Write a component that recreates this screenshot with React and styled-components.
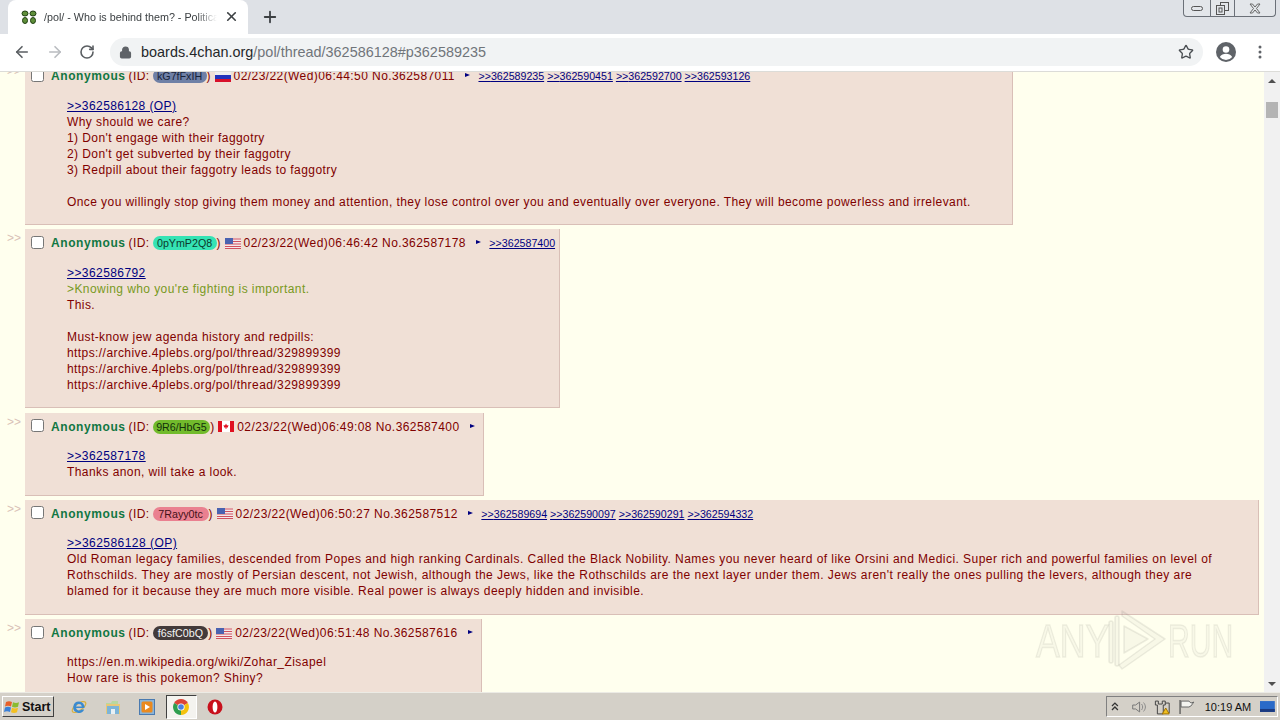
import React from "react";
import styled, { createGlobalStyle } from "styled-components";
import { ArrowLeft, ArrowRight, RotateCw, Lock, Star, X, Plus } from "lucide-react";

const Global = createGlobalStyle`
  html, body { margin: 0; padding: 0; height: 720px; overflow: hidden; background: #ffffee; }
  #root { height: 720px; }
  * { box-sizing: border-box; }
`;

const Screen = styled.div`
  width: 1280px; height: 720px; display: flex; flex-direction: column; overflow: hidden;
  font-family: "Liberation Sans", Arial, sans-serif;
`;
const TabStrip = styled.div`
  height: 34px; flex: none; background: #dee1e6; display: flex; align-items: flex-end; padding-left: 8px;
`;
const Tab = styled.div`
  width: 240px; height: 34px; background: #fff; border-radius: 8px 8px 0 0; display: flex; align-items: center;
  padding: 0 9px 1px 13px; gap: 7px; flex: none;
`;
const TabTitle = styled.div`
  flex: 1; overflow: hidden; white-space: nowrap; font-size: 10.75px; color: #3c4043;
  -webkit-mask-image: linear-gradient(90deg, #000 88%, transparent 100%);
  mask-image: linear-gradient(90deg, #000 88%, transparent 100%);
`;
const NewTab = styled.div`
  width: 30px; margin-left: 7px; height: 34px; display: flex; align-items: center; justify-content: center; color: #3c4043;
`;
const StripSpacer = styled.div`flex: 1; align-self: stretch;`;
const WindowButtons = styled.div`
  align-self: flex-start; display: flex; height: 17px; width: 93px; margin-right: 4px;
  border: 1px solid #6b7078; border-top: none; border-radius: 0 0 4px 4px; background: #e3e6ea;
`;
const WinBtn = styled.div`
  flex: ${(p) => p.$grow || 1}; display: flex; align-items: center; justify-content: center;
  & + & { border-left: 1px solid #6b7078; }
`;
const Toolbar = styled.div`
  height: 38px; flex: none; background: #fff; border-bottom: 1px solid #dcdcd8; display: flex; align-items: center;
  padding: 0 8px 1px 13px; color: #5f6368;
`;
const NavBtn = styled.div`
  width: 33px; display: flex; align-items: center; justify-content: flex-start; color: ${(p) => p.$off ? "#b9bcc0" : "#5a5e62"};
`;
const MenuBtn = styled.div`
  display: flex; align-items: center; margin-left: 22px;
`;
const Omnibox = styled.div`
  width: 1093px; margin-left: -2px; height: 28px; border-radius: 14px; background: #f1f3f4; display: flex; align-items: center;
  padding: 0 9px 0 9px; margin-right: 13px;
`;
const Url = styled.div`
  flex: 1; margin-left: 9px; font-size: 14.4px; white-space: nowrap; color: #70757a; letter-spacing: 0.02px;
  b { font-weight: 400; color: #24272a; }
`;
const Content = styled.div`
  flex: 1; min-height: 0; display: flex; position: relative; background: #ffffee; overflow: hidden;
`;
const Thread = styled.div`
  flex: 1; min-width: 0; margin-top: -10px;
  font-size: 12px; color: #800000; letter-spacing: 0.42px;
`;
const Row = styled.div`
  display: flex; margin-bottom: 4.3px;
`;
const Arrows = styled.div`
  width: 25px; flex: none; padding: 0 0 0 7px; font-size: 12px; line-height: 18px; color: #d9bfb7; letter-spacing: 0;
`;
const Post = styled.div`
  background: #f0e0d6; border-right: 1px solid #d9bfb7; border-bottom: 1px solid #d9bfb7;
  padding: 6px 0 14px 0; flex: none; width: ${(p) => p.$w}px;
`;
const Head = styled.div`
  height: 16px; display: flex; align-items: center; white-space: pre; padding-left: 6px;
`;
const Check = styled.span`
  width: 13px; height: 13px; border: 1px solid #767676; border-radius: 2.5px; background: #fff; flex: none; margin-right: 7px;
  position: relative; top: -1px;
`;
const Name = styled.b`color: #117743; letter-spacing: 0.58px; margin-right: 3px;`;
const Badge = styled.span`
  display: inline-block; height: 14px; line-height: 14px; width: ${(p) => p.$w}px; text-align: center; border-radius: 7px; font-size: 10.7px;
  margin: 0 0 0 3px; background: ${(p) => p.$bg}; color: ${(p) => p.$fg}; letter-spacing: 0;
`;
const FlagBox = styled.span`display: inline-flex; margin: 0 3px 0 3.6px; width: 16px; height: 11px;`;
const Tri = styled.span`
  width: 0; height: 0; border-left: 5px solid #000080; border-top: 2.5px solid transparent; border-bottom: 2.5px solid transparent;
  margin: 0 8px 2px 10.5px; flex: none;
`;
const Back = styled.a`
  color: #000080; text-decoration: underline; font-size: 10.65px; margin-right: 3px; letter-spacing: 0;
`;
const Quote = styled.div`
  margin: ${(p) => (p.$up ? "13px 0 1px 42px" : "14px 0 0 42px")}; line-height: 16px; white-space: nowrap; letter-spacing: ${(p) => p.$ls}px;
`;
const QLink = styled.a`color: #000080; text-decoration: underline;`;
const Green = styled.span`color: #789922;`;
const ScrollBar = styled.div`
  width: 16px; flex: none; background: #f1f1f1; display: flex; flex-direction: column; align-items: center;
`;
const ArrowBtn = styled.div`
  height: 17px; width: 100%; display: flex; align-items: center; justify-content: center; flex: none;
  &::after { content: ""; border-left: 4px solid transparent; border-right: 4px solid transparent;
    ${(p) => p.$down ? "border-top: 4px solid #505050;" : "border-bottom: 4px solid #505050;"} }
`;
const Thumb = styled.div`
  width: 12px; height: 16px; background: #b4b4b4; margin-top: 13px; flex: none;
`;
const Grow = styled.div`flex: 1;`;
const Watermark = styled.div`
  position: absolute; left: 1036px; top: 537px; width: 200px; height: 62px; display: flex; align-items: center; pointer-events: none;
`;
const WmText = styled.span`
  font-size: 47px; width: ${(p) => p.$w}px; margin-left: ${(p) => p.$ml || 0}px; display: inline-block; line-height: 1; white-space: nowrap;
  transform-origin: left center; transform: scaleX(${(p) => p.$sx}); color: rgba(120,120,110,0.05);
  -webkit-text-stroke: 1.5px rgba(110,110,100,0.11);
`;
const Taskbar = styled.div`
  height: 28px; flex: none; background: #d4d0c8; border-top: 1px solid #ecebe5; display: flex; align-items: center; padding: 0 2px;
`;
const Start = styled.div`
  width: 52px; height: 21px; display: flex; align-items: center; padding-left: 1px; font-weight: 700; font-size: 12.5px; color: #111;
  background: #d4d0c8; border: 1px solid; border-color: #fff #404040 #404040 #fff;
`;
const QuickLaunch = styled.div`display: flex; align-items: center; margin-left: 8px;`;
const Launch = styled.div`
  width: 34px; height: 24px; display: flex; align-items: center; justify-content: center; flex: none;
  ${(p) => p.$active && "background: #f4f3ef; border: 1px solid; border-color: #404040 #fff #fff #404040; width: 31px; margin: 0 1.5px;"}
`;
const Tray = styled.div`
  margin-left: auto; width: 172px; height: 21px; display: flex; align-items: center; padding: 0 2px 0 3px;
  border: 1px solid; border-color: #808080 #fff #fff #808080; font-size: 11px; color: #111;
`;
const Clock = styled.span`margin-left: auto; margin-right: 9px; white-space: nowrap;`;

const Flag = ({ kind }) => {
  const f = {
    ru: <><rect width="16" height="4" fill="#eee" /><rect y="4" width="16" height="4" fill="#2233bb" /><rect y="8" width="16" height="3" fill="#d8102a" /></>,
    us: <><rect width="16" height="11" fill="#f4e8e8" /><path d="M0 1h16M0 3.5h16M0 6h16M0 8.5h16M0 10.5h16" stroke="#d05060" strokeWidth="1.1" /><rect width="8" height="6" fill="#4a62b0" /></>,
    ca: <><rect width="16" height="11" fill="#fff" /><rect width="4" height="11" fill="#e01020" /><rect x="12" width="4" height="11" fill="#e01020" /><path d="M8 2.5l1 2 1.5-.5-.7 2.5H8.4V8h-.8V6.5H6.2L5.5 4l1.5.5z" fill="#e01020" /></>,
  }[kind];
  return <FlagBox><svg width="16" height="11" viewBox="0 0 16 11">{f}</svg></FlagBox>;
};

const posts = [
  { w: 988, bw: 54, ls: 0.42, id: "kG7fFxIH", bg: "#6f80a6", fg: "#17233a", flag: "ru", date: "02/23/22(Wed)06:44:50", no: "362587011",
    backs: ["362589235", "362590451", "362592700", "362593126"],
    body: [<QLink key="a">&gt;&gt;362586128 (OP)</QLink>, "Why should we care?", "1) Don't engage with their faggotry", "2) Don't get subverted by their faggotry", "3) Redpill about their faggotry leads to faggotry", "\u00a0", "Once you willingly stop giving them money and attention, they lose control over you and eventually over everyone. They will become powerless and irrelevant."] },
  { w: 535, bw: 64, ls: 0.42, id: "0pYmP2Q8", bg: "#35e3b4", fg: "#0c3a2c", flag: "us", date: "02/23/22(Wed)06:46:42", no: "362587178",
    backs: ["362587400"],
    body: [<QLink key="a">&gt;&gt;362586792</QLink>, <Green key="g">&gt;Knowing who you're fighting is important.</Green>, "This.", "\u00a0", "Must-know jew agenda history and redpills:", "https://archive.4plebs.org/pol/thread/329899399", "https://archive.4plebs.org/pol/thread/329899399", "https://archive.4plebs.org/pol/thread/329899399"] },
  { w: 459, bw: 59, ls: 0.42, up: true, id: "9R6/HbG5", bg: "#72bb2c", fg: "#12300a", flag: "ca", date: "02/23/22(Wed)06:49:08", no: "362587400",
    backs: [],
    body: [<QLink key="a">&gt;&gt;362587178</QLink>, "Thanks anon, will take a look."] },
  { w: 1234, bw: 56, ls: 0.46, up: true, id: "7Rayy0tc", bg: "#ea8090", fg: "#451018", flag: "us", date: "02/23/22(Wed)06:50:27", no: "362587512",
    backs: ["362589694", "362590097", "362590291", "362594332"],
    body: [<QLink key="a">&gt;&gt;362586128 (OP)</QLink>, "Old Roman legacy families, descended from Popes and high ranking Cardinals. Called the Black Nobility. Names you never heard of like Orsini and Medici. Super rich and powerful families on level of", "Rothschilds. They are mostly of Persian descent, not Jewish, although the Jews, like the Rothschilds are the next layer under them. Jews aren't really the ones pulling the levers, although they are", "blamed for it because they are much more visible. Real power is always deeply hidden and invisible."] },
  { w: 457, bw: 57, ls: 0.44, up: true, id: "f6sfC0bQ", bg: "#433a3a", fg: "#f4f4f4", flag: "us", date: "02/23/22(Wed)06:51:48", no: "362587616",
    backs: [],
    body: ["https://en.m.wikipedia.org/wiki/Zohar_Zisapel", "How rare is this pokemon? Shiny?", "\u00a0"] },
];

const Clover = () => (
  <svg width="16" height="16" viewBox="0 0 16 16" fill="#5f8f3a" stroke="#1f3f10" strokeWidth="1">
    <ellipse cx="4" cy="4.5" rx="3" ry="2.5" /><ellipse cx="12" cy="4.5" rx="3" ry="2.5" />
    <ellipse cx="4" cy="11.5" rx="2.5" ry="3" /><ellipse cx="12" cy="11.5" rx="2.5" ry="3" />
  </svg>
);

const Profile = () => (
  <svg width="20" height="20" viewBox="0 0 20 20">
    <circle cx="10" cy="10" r="10" fill="#5f6368" />
    <circle cx="10" cy="7.5" r="3.3" fill="#fff" />
    <path d="M3.8 15c1.3-2.4 3.7-3.3 6.2-3.3s4.9.9 6.2 3.3A8 8 0 0 1 10 18a8 8 0 0 1-6.2-3z" fill="#fff" />
  </svg>
);

const Dots = () => (
  <svg width="4" height="14" viewBox="0 0 4 14" fill="#5f6368"><circle cx="2" cy="2" r="1.5" /><circle cx="2" cy="7" r="1.5" /><circle cx="2" cy="12" r="1.5" /></svg>
);

const Win = () => (
  <svg width="18" height="16" viewBox="0 0 18 16">
    <path d="M2 3c2-1 4-1 6 0L7 7.5c-2-1-4-1-6 0z" fill="#e8602a" />
    <path d="M9 3.2c2 1 4 1 6 0l-1 4.5c-2 1-4 1-6 0z" fill="#8abb30" />
    <path d="M1 8.5c2-1 4-1 6 0L6 13c-2-1-4-1-6 0z" fill="#3a80d8" />
    <path d="M8 8.7c2 1 4 1 6 0L13 13.2c-2 1-4 1-6 0z" fill="#f4c020" />
  </svg>
);
const Ie = () => (
  <svg width="18" height="18" viewBox="0 0 18 18">
    <ellipse cx="9" cy="9" rx="8" ry="3.5" transform="rotate(-35 9 9)" fill="none" stroke="#d8b040" strokeWidth="1.3" />
    <path d="M9 3.5a5.7 5.7 0 1 0 5.2 8h-2.7a3.2 3.2 0 0 1-5.5-1.4h8.4A5.7 5.7 0 0 0 9 3.5zM6 8.4a3 3 0 0 1 5.9 0z" fill="#3a8ad0" />
  </svg>
);
const Folder = () => (
  <svg width="18" height="18" viewBox="0 0 18 18">
    <path d="M2 5h5l1-2h6v3H2z" fill="#b8d8a0" />
    <rect x="2" y="6" width="14" height="10" fill="#e8c878" />
    <rect x="3" y="8" width="12" height="8" fill="#7cb4d8" />
    <rect x="7" y="11" width="4" height="5" fill="#e8f0f4" />
  </svg>
);
const Media = () => (
  <svg width="16" height="16" viewBox="0 0 16 16">
    <rect x=".5" y=".5" width="15" height="15" fill="#8ab4d8" stroke="#4a7ab0" />
    <rect x="2.5" y="2.5" width="11" height="11" rx="1.5" fill="#ea8a20" />
    <path d="M6 5l5 3-5 3z" fill="#fff" />
  </svg>
);
const Chrome = () => (
  <svg width="16" height="16" viewBox="0 0 16 16">
    <path d="M8 8L1.1 4A8 8 0 0 1 14.9 4z" fill="#db4437" />
    <path d="M8 8l6.9-4A8 8 0 0 1 8 16z" fill="#f4c20d" />
    <path d="M8 8v8A8 8 0 0 1 1.1 4z" fill="#2f9e4f" />
    <circle cx="8" cy="8" r="3.6" fill="#fff" /><circle cx="8" cy="8" r="2.8" fill="#4a80e0" />
  </svg>
);
const Opera = () => (
  <svg width="16" height="16" viewBox="0 0 16 16">
    <circle cx="8" cy="8" r="7.5" fill="#c8101c" />
    <ellipse cx="8" cy="8" rx="2.4" ry="5.5" fill="#fff" />
  </svg>
);
const TrayIcons = () => (
  <svg width="96" height="16" viewBox="0 0 96 16" fill="none" stroke="#333">
    <path d="M2 7l3-3 3 3M2 11l3-3 3 3" strokeWidth="1.3" />
    <path d="M23 6h3l4-3v10l-4-3h-3z" stroke="#777" />
    <path d="M32 5c1.5 2 1.5 4 0 6M34 3.5c2.5 3 2.5 6 0 9" stroke="#888" />
    <path d="M46 2h3v3h4V2h3v4h-2v9h-6V6h-2zM56 4h4v10h-4" stroke="#444" />
    <path d="M53 15l3.5-6 3.5 6z" fill="#f0c020" stroke="#a07000" />
    <path d="M71 1v14" stroke="#555" strokeWidth="1.3" />
    <path d="M72 2h8l2 2 3-1-3 4-2 1h-8z" fill="#f4f4f0" stroke="#666" />
  </svg>
);
const WmLogo = () => (
  <svg width="60" height="62" viewBox="0 0 60 62" fill="rgba(120,120,110,0.05)" stroke="rgba(110,110,100,0.12)" strokeWidth="1.5" strokeLinejoin="round">
    <rect x="2" y="12" width="4" height="42" rx="2" />
    <rect x="8" y="7" width="4" height="50" rx="2" />
    <path d="M15 2l43 28L15 60l-3-4 36-26L15 7z" />
    <path d="M17 17l24 13-24 14z" />
  </svg>
);

export default function App() {
  return (
    <Screen>
      <Global />
      <TabStrip>
        <Tab>
          <Clover />
          <TabTitle>/pol/ - Who is behind them? - Political Incorrect</TabTitle>
          <X size={15} strokeWidth={2.6} color="#3c4043" />
        </Tab>
        <NewTab><Plus size={18} strokeWidth={2.4} /></NewTab>
        <StripSpacer />
        <WindowButtons>
          <WinBtn $grow={1.1}><svg width="12" height="7" viewBox="0 0 12 7" fill="none" stroke="#555"><rect x=".5" y="1.5" width="11" height="4" rx="2" /></svg></WinBtn>
          <WinBtn $grow={1}><svg width="13" height="13" viewBox="0 0 13 13" fill="none" stroke="#555"><rect x="4.5" y=".5" width="8" height="8" /><rect x=".5" y="3.5" width="8" height="9" fill="#e3e6ea" /><rect x="3" y="6" width="3" height="4" /></svg></WinBtn>
          <WinBtn $grow={1.7}><svg width="12" height="11" viewBox="0 0 12 11" fill="none" stroke="#666"><path d="M1 1h2.5L6 4l2.5-3H11L7.5 5.5 11 10H8.5L6 7l-2.5 3H1l3.5-4.5z" /></svg></WinBtn>
        </WindowButtons>
      </TabStrip>
      <Toolbar>
        <NavBtn><ArrowLeft size={18} strokeWidth={2.2} /></NavBtn>
        <NavBtn $off><ArrowRight size={18} strokeWidth={2.2} /></NavBtn>
        <NavBtn><RotateCw size={16} strokeWidth={2.4} /></NavBtn>
        <Omnibox>
          <Lock size={13} strokeWidth={2.6} fill="#5f6368" color="#5f6368" />
          <Url><b>boards.4chan.org</b>/pol/thread/362586128#p362589235</Url>
          <Star size={16} strokeWidth={2} color="#4a4e52" />
        </Omnibox>
        <Profile />
        <MenuBtn><Dots /></MenuBtn>
      </Toolbar>
      <Content>
        <Thread>
          {posts.map((p) => (
            <Row key={p.no}>
              <Arrows>&gt;&gt;</Arrows>
              <Post $w={p.w}>
                <Head>
                  <Check />
                  <Name>Anonymous</Name>
                  (ID:
                  <Badge $w={p.bw} $bg={p.bg} $fg={p.fg}>{p.id}</Badge>
                  )
                  <Flag kind={p.flag} />
                  {p.date} No.{p.no}
                  <Tri />
                  {p.backs.map((b) => <Back key={b}>&gt;&gt;{b}</Back>)}
                </Head>
                <Quote $ls={p.ls} $up={p.up}>
                  {p.body.map((l, i) => <div key={i}>{l}</div>)}
                </Quote>
              </Post>
            </Row>
          ))}
        </Thread>
        <ScrollBar>
          <ArrowBtn />
          <Thumb />
          <Grow />
          <ArrowBtn $down />
        </ScrollBar>
        <Watermark>
          <WmText $w={71} $sx={0.76}>ANY</WmText>
          <WmLogo />
          <WmText $w={60} $ml={1} $sx={0.64}>RUN</WmText>
        </Watermark>
      </Content>
      <Taskbar>
        <Start><Win />Start</Start>
        <QuickLaunch>
          <Launch><Ie /></Launch>
          <Launch><Folder /></Launch>
          <Launch><Media /></Launch>
          <Launch $active><Chrome /></Launch>
          <Launch><Opera /></Launch>
        </QuickLaunch>
        <Tray>
          <TrayIcons />
          <Clock>10:19 AM</Clock>
          <svg width="15" height="11" viewBox="0 0 15 11"><rect width="15" height="11" fill="#2a6ac8" /><rect y="8" width="15" height="3" fill="#1a3a80" /></svg>
        </Tray>
      </Taskbar>
    </Screen>
  );
}
